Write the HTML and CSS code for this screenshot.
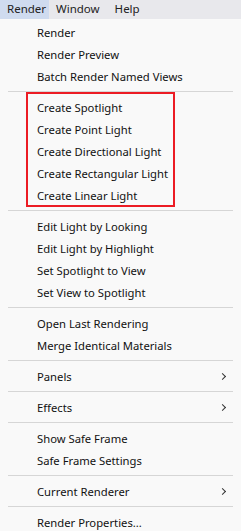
FILE: index.html
```html
<!DOCTYPE html>
<html lang="en">
<head>
  <meta charset="UTF-8" />
  <title>Render Menu</title>
  <link rel="stylesheet" href="styles.css">
</head>
<body>
  <!-- Top menu bar -->
  <div class="menubar">
    <span class="menubar-item open">Render</span>
    <span class="menubar-item">Window</span>
    <span class="menubar-item">Help</span>
  </div>

  <!-- Render dropdown -->
  <div class="dropdown">
    <div class="item">Render</div>
    <div class="item">Render Preview</div>
    <div class="item">Batch Render Named Views</div>
    <div class="sep"></div>

    <div class="group">
      <div class="highlight"></div>
      <div class="item">Create Spotlight</div>
      <div class="item">Create Point Light</div>
      <div class="item">Create Directional Light</div>
      <div class="item">Create Rectangular Light</div>
      <div class="item">Create Linear Light</div>
    </div>
    <div class="sep"></div>

    <div class="item">Edit Light by Looking</div>
    <div class="item">Edit Light by Highlight</div>
    <div class="item">Set Spotlight to View</div>
    <div class="item">Set View to Spotlight</div>
    <div class="sep"></div>

    <div class="item">Open Last Rendering</div>
    <div class="item">Merge Identical Materials</div>
    <div class="sep"></div>

    <div class="item submenu">Panels <span class="chevron"></span></div>
    <div class="sep"></div>
    <div class="item submenu">Effects <span class="chevron"></span></div>
    <div class="sep"></div>

    <div class="item">Show Safe Frame</div>
    <div class="item">Safe Frame Settings</div>
    <div class="sep"></div>

    <div class="item submenu">Current Renderer <span class="chevron"></span></div>
    <div class="sep"></div>
    <div class="item">Render Properties...</div>
  </div>
</body>
</html>
```

FILE: styles.css
```css
/* Basic reset */
* {
  margin: 0;
  padding: 0;
  box-sizing: border-box;
}

body {
  font-family: "Noto Sans", "Open Sans", sans-serif;
  font-size: 11.25px;
  color: #111;
  background-color: #f9f9f9;
  overflow: hidden;
}

/* Menu bar along the top */
.menubar {
  display: flex;
  height: 19px;
  background-color: #e8e8ec;
}

.menubar-item {
  padding: 0 8px 0 7px;
  line-height: 17px;
  height: 19px;
  color: #222;
  font-size: 11.5px;
}

.menubar-item.open {
  background-color: #cfdbef;
  width: 49px;
  padding-right: 0;
}

/* Dropdown panel */
.dropdown {
  background-color: #f9f9f9;
  padding-top: 2px;
}

.item {
  display: flex;
  align-items: center;
  height: 22px;
  padding-left: 37px;
  padding-right: 16px;
  white-space: nowrap;
}

.item.submenu {
  justify-content: space-between;
}

.chevron {
  width: 5px;
  height: 5px;
  border-top: 1.3px solid #333;
  border-right: 1.3px solid #333;
  transform: rotate(45deg);
}

.sep {
  height: 9px;
  margin: 0 8px;
  display: flex;
  align-items: center;
}

.sep::before {
  content: "";
  flex: 1;
  height: 1px;
  background-color: #d6d6d6;
}

/* Red highlight box around the light commands */
.group {
  position: relative;
}

.highlight {
  position: absolute;
  left: 26px;
  width: 149px;
  top: -4px;
  bottom: -1px;
  border: 2px solid #ec1c24;
  pointer-events: none;
}
```
